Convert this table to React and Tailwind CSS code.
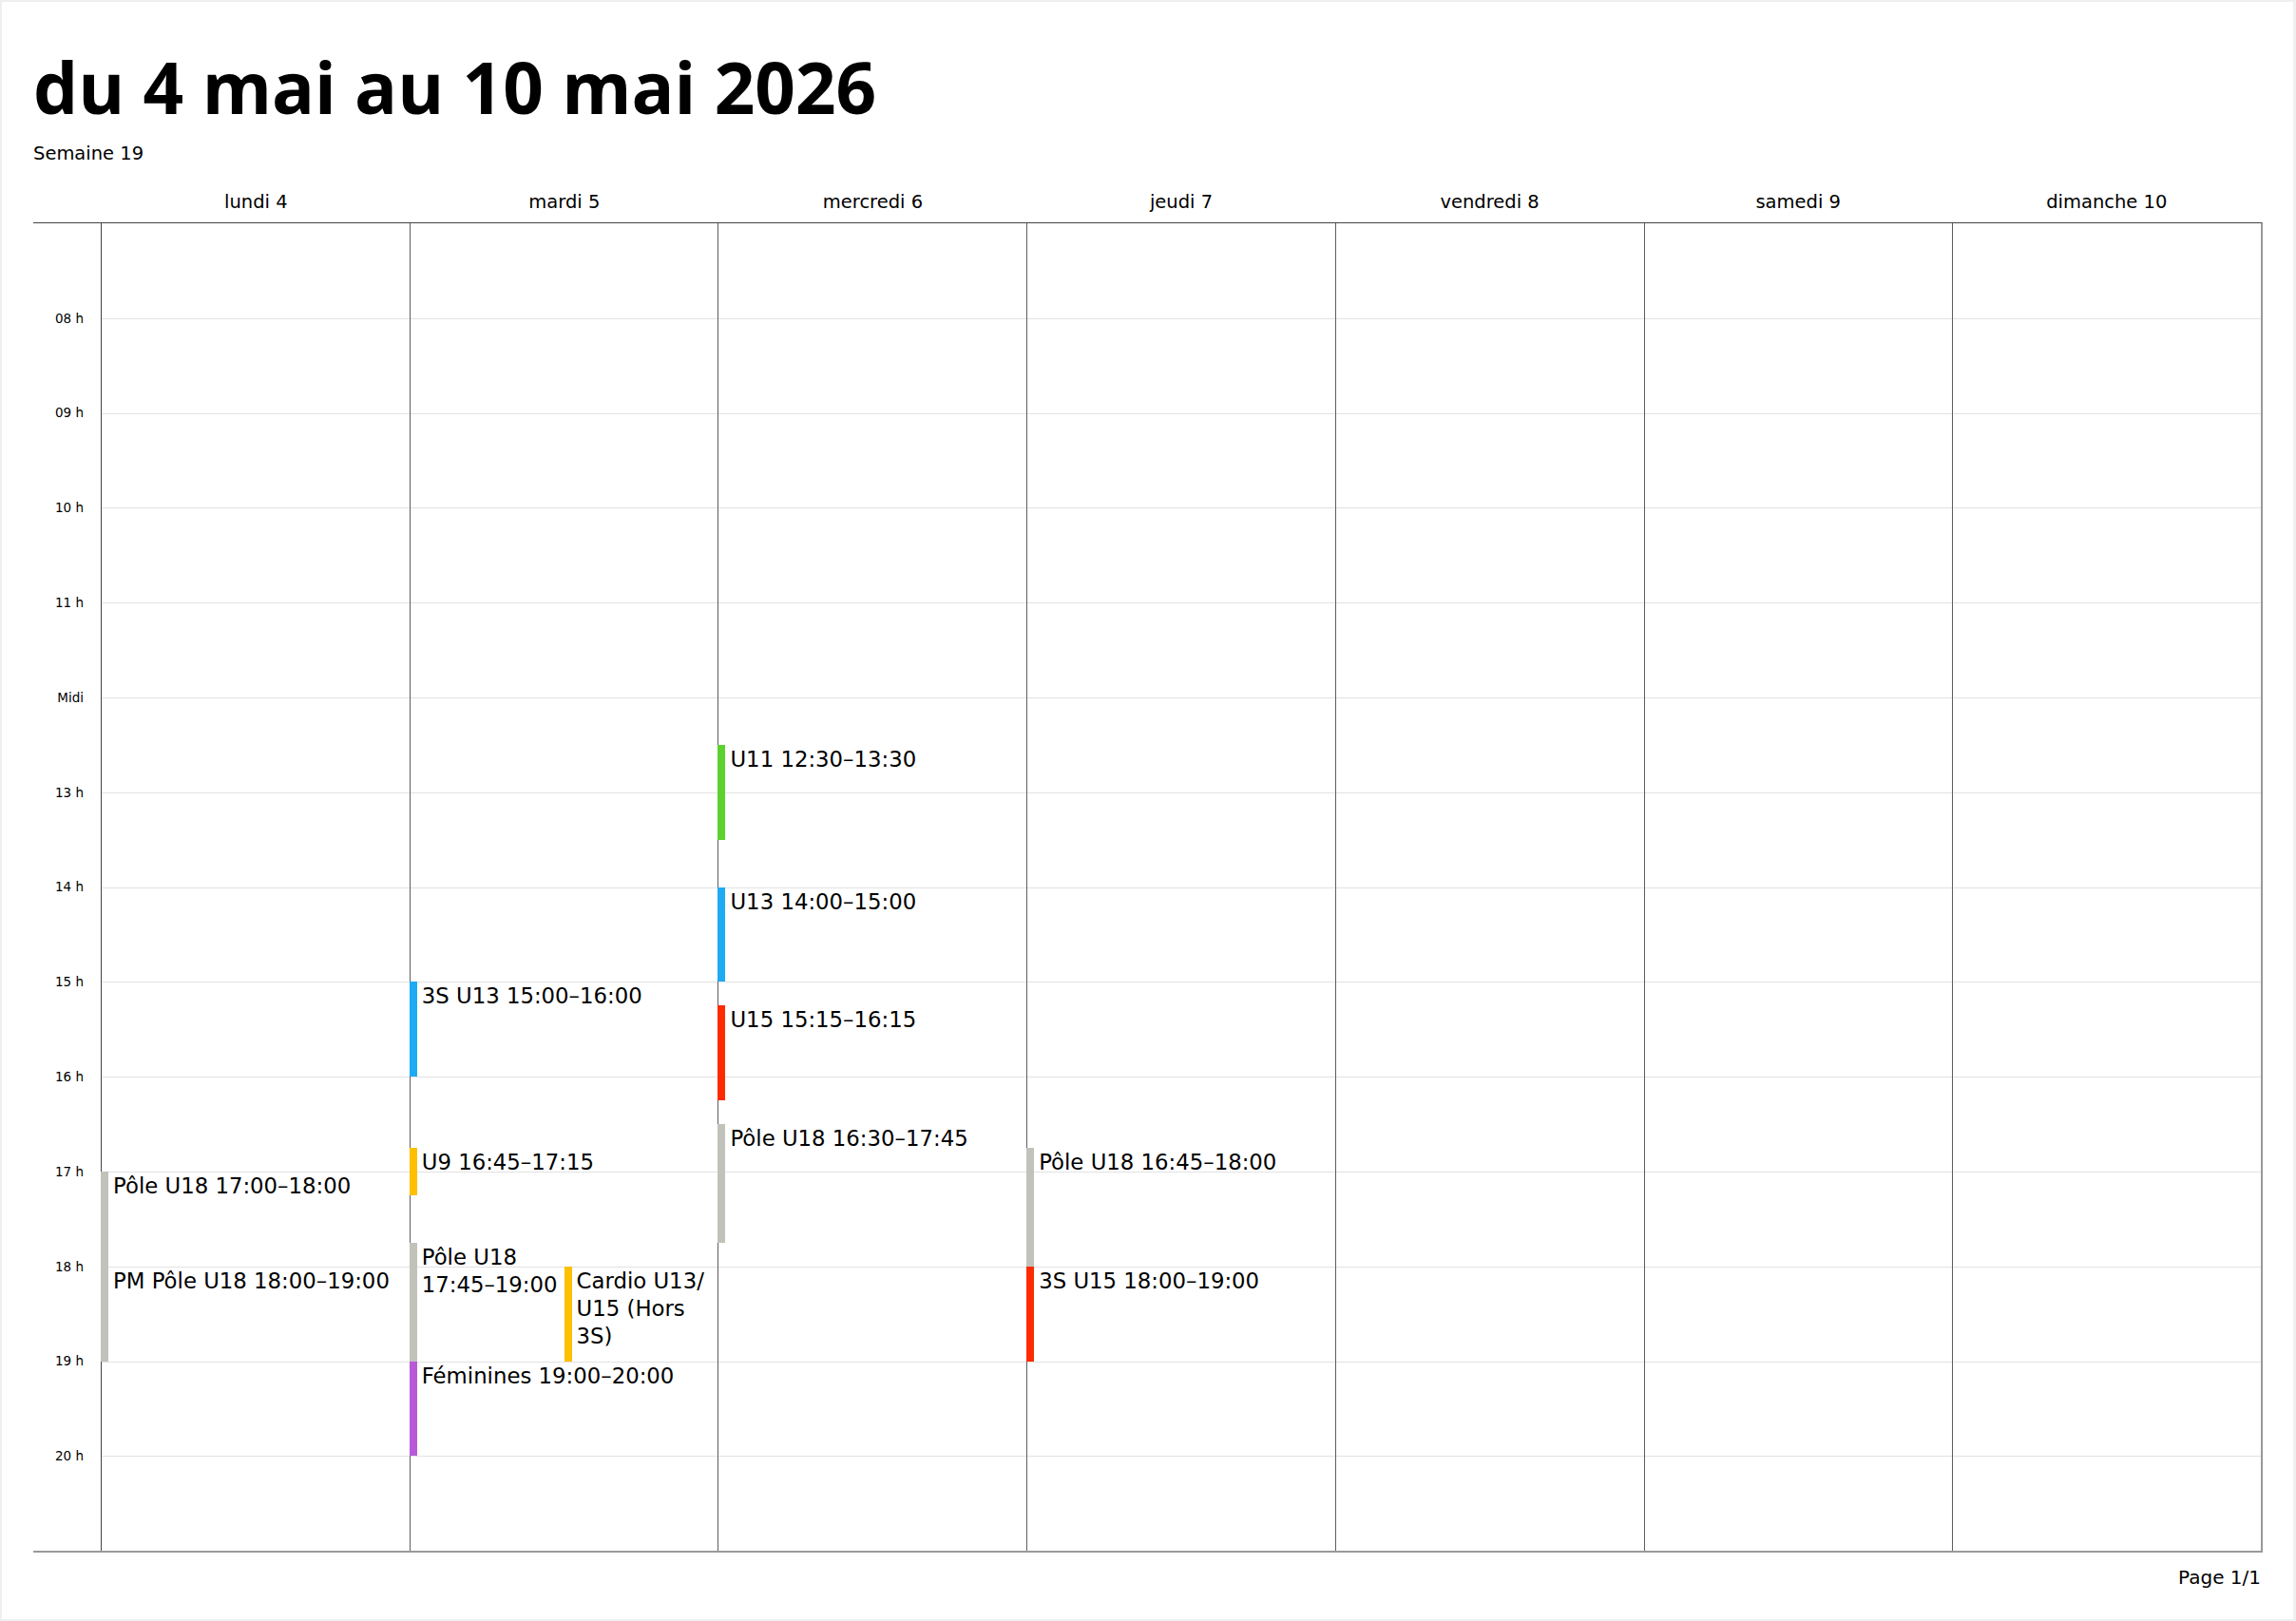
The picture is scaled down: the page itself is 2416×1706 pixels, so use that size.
import React from "react";

const HOUR = 99.8;
const FIRST_HOUR = 7;

const hourLabels = ["08 h", "09 h", "10 h", "11 h", "Midi", "13 h", "14 h", "15 h", "16 h", "17 h", "18 h", "19 h", "20 h"];

const GRAY = "bg-[#c1c3bb]";
const BLUE = "bg-[#1eabf3]";
const YELLOW = "bg-[#fdbf00]";
const RED = "bg-[#ff2b00]";
const GREEN = "bg-[#5bd22d]";
const PURPLE = "bg-[#b85ad8]";

const FULL = "-left-px right-0";
const LEFT_HALF = "-left-px right-1/2";
const RIGHT_HALF = "left-1/2 right-0";

const days = [
  {
    label: "lundi 4",
    events: [
      { title: "Pôle U18 17:00–18:00", start: 17, end: 18, color: GRAY, pos: FULL },
      { title: "PM Pôle U18 18:00–19:00", start: 18, end: 19, color: GRAY, pos: FULL },
    ],
  },
  {
    label: "mardi 5",
    events: [
      { title: "3S U13 15:00–16:00", start: 15, end: 16, color: BLUE, pos: FULL },
      { title: "U9 16:45–17:15", start: 16.75, end: 17.25, color: YELLOW, pos: FULL },
      { title: "Pôle U18 17:45–19:00", start: 17.75, end: 19, color: GRAY, pos: LEFT_HALF },
      { title: "Cardio U13/\u200BU15 (Hors 3S)", start: 18, end: 19, color: YELLOW, pos: RIGHT_HALF },
      { title: "Féminines 19:00–20:00", start: 19, end: 20, color: PURPLE, pos: FULL },
    ],
  },
  {
    label: "mercredi 6",
    events: [
      { title: "U11 12:30–13:30", start: 12.5, end: 13.5, color: GREEN, pos: FULL },
      { title: "U13 14:00–15:00", start: 14, end: 15, color: BLUE, pos: FULL },
      { title: "U15 15:15–16:15", start: 15.25, end: 16.25, color: RED, pos: FULL },
      { title: "Pôle U18 16:30–17:45", start: 16.5, end: 17.75, color: GRAY, pos: FULL },
    ],
  },
  {
    label: "jeudi 7",
    events: [
      { title: "Pôle U18 16:45–18:00", start: 16.75, end: 18, color: GRAY, pos: FULL },
      { title: "3S U15 18:00–19:00", start: 18, end: 19, color: RED, pos: FULL },
    ],
  },
  { label: "vendredi 8", events: [] },
  { label: "samedi 9", events: [] },
  { label: "dimanche 10", events: [] },
];

function Event({ ev }) {
  return (
    <div
      className={`absolute flex overflow-hidden ${ev.pos}`}
      style={{ top: (ev.start - FIRST_HOUR) * HOUR, height: (ev.end - ev.start) * HOUR }}
    >
      <div className={`w-[8px] shrink-0 ${ev.color}`}></div>
      <div className="pl-[5px] pt-[1px] text-[22.8px] leading-[29px] text-black">{ev.title}</div>
    </div>
  );
}

function DayColumn({ day, first }) {
  return (
    <div
      className={
        first
          ? "relative flex-1 flex flex-col border-l border-[#444444]"
          : "relative flex-1 flex flex-col border-l border-[#5e5e5e]"
      }
    >
      {Array.from({ length: 14 }).map((_, i) => (
        <div
          key={i}
          className={i === 0 ? "h-[99.8px]" : "h-[99.8px] border-t border-[#e2e2e2]"}
        ></div>
      ))}
      {day.events.map((ev, i) => (
        <Event key={i} ev={ev} />
      ))}
    </div>
  );
}

export default function App() {
  return (
    <div className="min-h-screen bg-[#efefef] pt-[2px] pl-[2px] pr-[3px] pb-[2px] font-['DejaVu_Sans',sans-serif] text-black">
      <div className="bg-white h-[1702px] pl-[33px] pr-[32px]">
        <h1 className="pt-[52px] text-[74.6px] leading-[75px] font-bold font-['Open_Sans',sans-serif] whitespace-nowrap">
          du 4 mai au 10 mai 2026
        </h1>
        <div className="mt-[23px] text-[19.5px] leading-[19.5px]">Semaine 19</div>

        <div className="mt-[31px] flex text-[19.5px] leading-[19.5px] pr-[2px]">
          <div className="w-[72px] shrink-0"></div>
          {days.map((d) => (
            <div key={d.label} className="flex-1 text-center">
              {d.label}
            </div>
          ))}
        </div>

        <div className="mt-[12px] flex border-t border-t-[#444444] border-r-2 border-b-2 border-r-[#999999] border-b-[#999999]">
          <div className="w-[71px] shrink-0 flex flex-col text-[13.5px]">
            <div className="h-[49.9px]"></div>
            {hourLabels.map((h) => (
              <div key={h} className="h-[99.8px] flex items-center justify-end pr-[18px]">
                {h}
              </div>
            ))}
            <div className="h-[49.9px]"></div>
          </div>
          {days.map((d, i) => (
            <DayColumn key={d.label} day={d} first={i === 0} />
          ))}
        </div>

        <div className="mt-[16px] text-right text-[20px] leading-[20px] pr-[2px]">Page 1/1</div>
      </div>
    </div>
  );
}
